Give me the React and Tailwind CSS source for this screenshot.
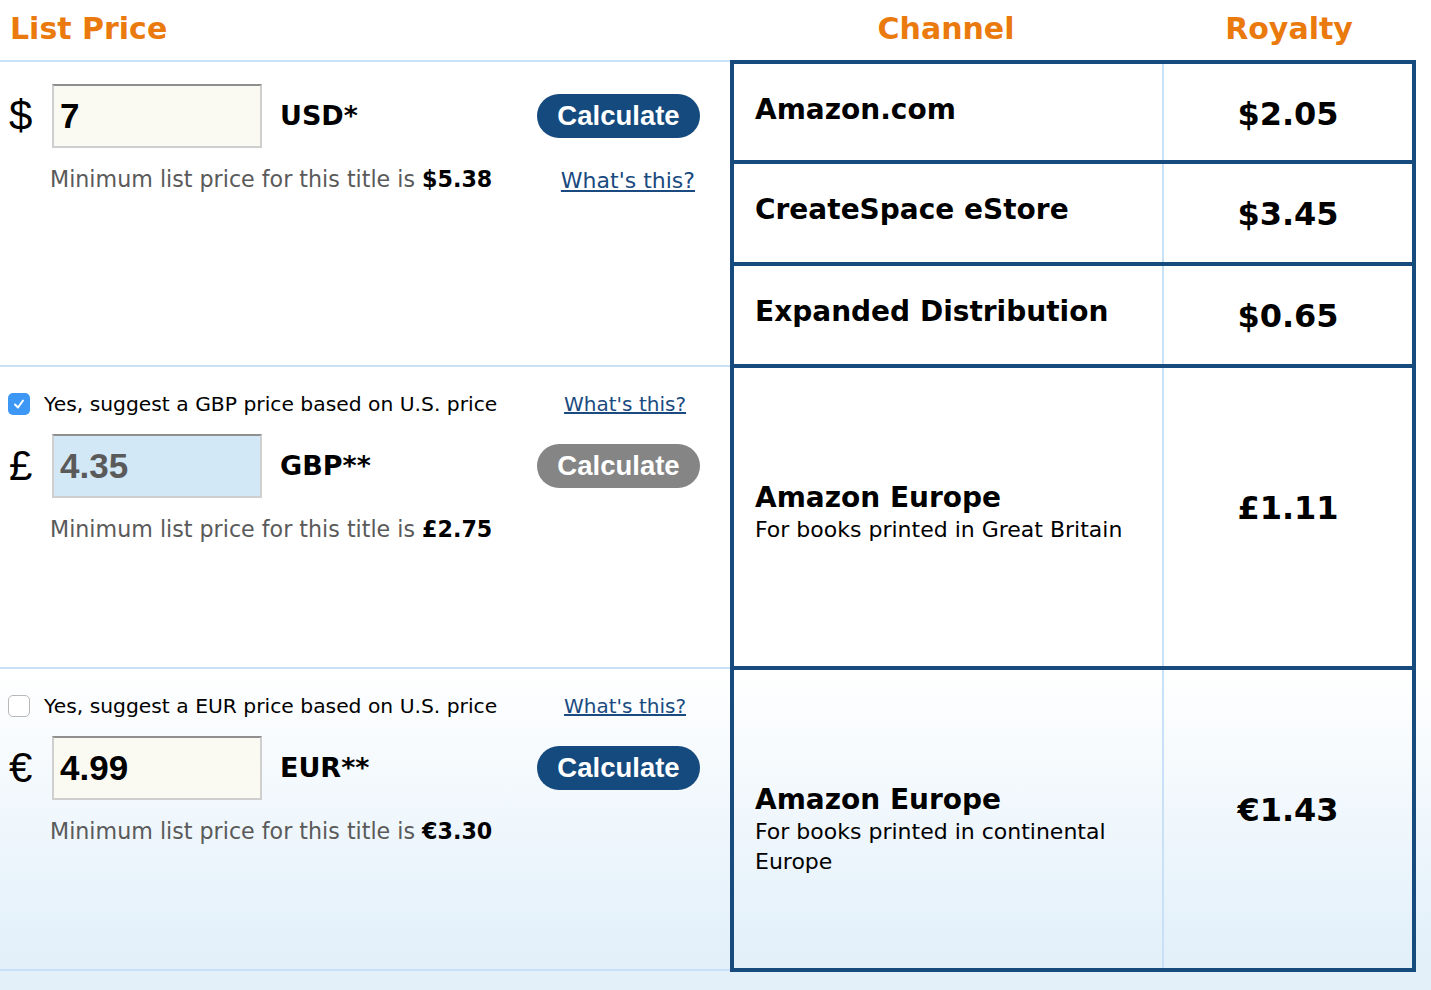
import React from "react";

const sections = [
  {
    symbol: "$",
    value: "7",
    code: "USD*",
    min: "$5.38",
    inputBg: "bg-[#fafaf2]",
    valueColor: "text-black",
    buttonBg: "bg-[#154a7e]",
  },
  {
    symbol: "£",
    value: "4.35",
    code: "GBP**",
    min: "£2.75",
    inputBg: "bg-[#d3e8f6]",
    valueColor: "text-[#5a5a5a]",
    buttonBg: "bg-[#858585]",
    suggest: "GBP",
    checked: true,
  },
  {
    symbol: "€",
    value: "4.99",
    code: "EUR**",
    min: "€3.30",
    inputBg: "bg-[#fafaf2]",
    valueColor: "text-black",
    buttonBg: "bg-[#154a7e]",
    suggest: "EUR",
    checked: false,
  },
];

function Checkbox({ checked }) {
  if (checked) {
    return (
      <span className="flex h-[22px] w-[22px] items-center justify-center rounded-[5px] bg-[#3c97f5]">
        <svg width="14" height="14" viewBox="0 0 14 14">
          <path d="M3 7.5 L6 10.5 L11 3.5" fill="none" stroke="white" strokeWidth="2" strokeLinecap="round" strokeLinejoin="round" />
        </svg>
      </span>
    );
  }
  return <span className="block h-[22px] w-[22px] rounded-[5px] border border-[#b8b8b8] bg-white" />;
}

function PriceSection({ s, first }) {
  return (
    <div className={`flex flex-col ${first ? "h-[305px] pt-[22px]" : "h-[302px] pt-[24px]"} border-b-2 border-[#c8e1f8]`}>
      {s.suggest && (
        <div className="mb-[17px] flex h-[26px] items-center">
          <div className="ml-[8px]">
            <Checkbox checked={s.checked} />
          </div>
          <span className="ml-[14px] text-[20.3px] text-black">
            Yes, suggest a {s.suggest} price based on U.S. price
          </span>
          <a className="ml-auto mr-[44px] text-[20px] text-[#1a4a80] underline">What's this?</a>
        </div>
      )}
      <div className="flex h-[64px] items-center">
        <span className="ml-[9px] w-[43px] font-['Liberation_Sans',sans-serif] text-[42px] leading-none text-black">
          {s.symbol}
        </span>
        <div
          className={`flex h-[64px] w-[210px] items-center border-2 border-[#cfcfcf] border-t-[#8f8f8f] ${s.inputBg} pl-[6px] font-['Liberation_Sans',sans-serif] text-[35px] font-bold ${s.valueColor}`}
        >
          {s.value}
        </div>
        <span className="ml-[18px] text-[27px] font-bold text-black">{s.code}</span>
        <button
          className={`ml-auto mr-[30px] flex h-[44px] w-[163px] items-center justify-center rounded-full ${s.buttonBg} font-['Liberation_Sans',sans-serif] text-[27.5px] font-bold text-white`}
        >
          Calculate
        </button>
      </div>
      <div className="mt-[18px] flex h-[28px] items-center">
        <span className="ml-[50px] text-[22.2px] text-[#5a5a5a]">
          Minimum list price for this title is <b className="text-black">{s.min}</b>
        </span>
        {first && (
          <a className="ml-auto mr-[35px] text-[22px] text-[#1a4a80] underline">What's this?</a>
        )}
      </div>
    </div>
  );
}

const rows = [
  { name: "Amazon.com", royalty: "$2.05", h: "h-[100px]" },
  { name: "CreateSpace eStore", royalty: "$3.45", h: "h-[102px]" },
  { name: "Expanded Distribution", royalty: "$0.65", h: "h-[102px]" },
  { name: "Amazon Europe", sub: "For books printed in Great Britain", royalty: "£1.11", h: "h-[302px]", tall: true },
  { name: "Amazon Europe", sub: "For books printed in continental Europe", royalty: "€1.43", h: "h-[302px]", tall: true },
];

export default function App() {
  return (
    <div className="min-h-[990px] w-[1431px] bg-[linear-gradient(to_bottom,#ffffff_668px,#e3f0fa_950px,#e3f0fa)] font-['DejaVu_Sans',Verdana,sans-serif]">
      <div className="flex h-[60px] items-center pb-[4px] text-[30px] font-bold text-[#ea7a0d]">
        <div className="w-[730px] pl-[10px]">List Price</div>
        <div className="w-[432px] text-center">Channel</div>
        <div className="w-[254px] text-center">Royalty</div>
      </div>
      <div className="flex">
        <div className="w-[730px] border-t-2 border-[#c8e1f8]">
          {sections.map((s, i) => (
            <PriceSection key={s.code} s={s} first={i === 0} />
          ))}
        </div>
        <div className="w-[686px] border-x-4 border-t-4 border-[#174b7d]">
          {rows.map((r, i) => (
            <div key={i} className={`flex ${r.h} border-b-4 border-[#174b7d]`}>
              <div
                className={`w-[430px] border-r-2 border-[#c8e1f8] pl-[21px] pr-[20px] ${r.tall ? "pt-[113px]" : "pt-[29px]"}`}
              >
                <div className="text-[28px] font-bold leading-[34px] text-black">{r.name}</div>
                {r.sub && <div className="text-[22px] leading-[30px] text-black">{r.sub}</div>}
              </div>
              <div
                className={`flex-1 text-center text-[32px] font-bold leading-[38px] text-black ${r.tall ? "pt-[121px]" : "pt-[31px]"}`}
              >
                {r.royalty}
              </div>
            </div>
          ))}
        </div>
      </div>
    </div>
  );
}
